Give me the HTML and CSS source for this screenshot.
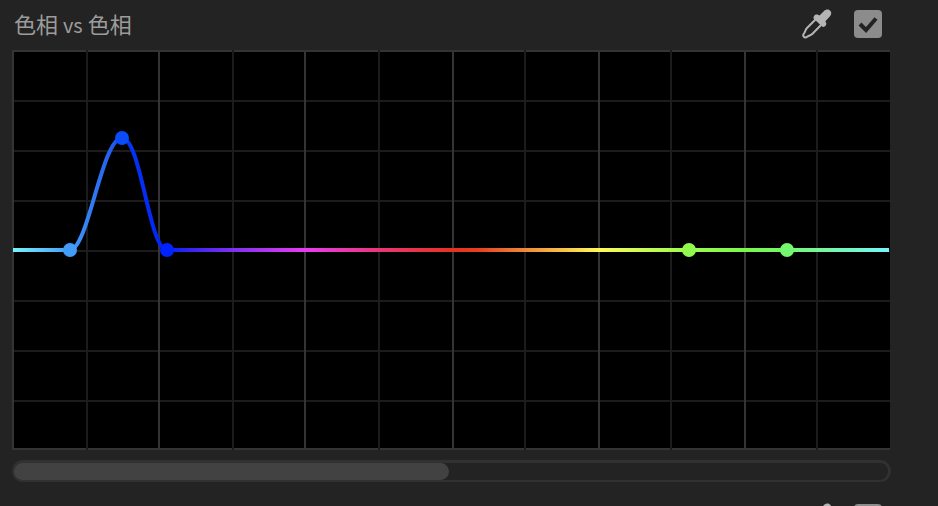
FILE: index.html
```html
<!DOCTYPE html>
<html lang="zh-CN">
<head>
    <meta charset="UTF-8">
    <meta name="viewport" content="width=device-width, initial-scale=1.0">
    <title>色相 vs 色相</title>
    <link rel="stylesheet" href="styles.css">
</head>
<body>
    <svg class="symbols" aria-hidden="true">
        <symbol id="dropper" viewBox="0 0 30 30">
            <path d="M13.5 10.5 L5 19 C3.4 20.6 3.2 22.4 2.4 23.8 C1 25.4 0.8 26.8 1.8 27.8 C2.8 28.8 4.4 28.4 5.8 27.2 C7.4 26.6 9 26.2 10.5 24.7 L19 16" fill="none" stroke="currentColor" stroke-width="2" stroke-linejoin="round"/>
            <path d="M11.6 9.5 C11 7.2 13.2 4.8 15.5 5.6 L17.5 6.6 L22 2 C24 0 26.7 0 28.2 1.8 C29.8 3.5 29.6 5.8 27.8 7.6 L23.4 12.2 L24.2 14 C24.8 16.3 22.5 18.5 20.3 17.8 Z" fill="currentColor"/>
        </symbol>
        <symbol id="tick" viewBox="0 0 28 28">
            <path d="M6 14 L12 20 L22 8.5" fill="none" stroke="#232323" stroke-width="4"/>
        </symbol>
    </svg>

    <section class="panel">
        <header class="panel-header">
            <h2 class="title">色相 <span class="versus">vs</span> 色相</h2>
            <button class="picker" type="button" aria-label="吸管">
                <svg class="picker-icon"><use href="#dropper"/></svg>
            </button>
            <label class="check" aria-label="启用色相 vs 色相">
                <input class="check-input" type="checkbox" checked>
                <svg class="check-icon"><use href="#tick"/></svg>
            </label>
        </header>

        <svg class="curve" viewBox="0 0 878 400">
            <defs>
                <linearGradient id="hue" gradientUnits="userSpaceOnUse" x1="0" y1="0" x2="878" y2="0">
                    <stop offset="0" stop-color="#78f5fc"/>
                    <stop offset="0.066" stop-color="#429cfa"/>
                    <stop offset="0.12" stop-color="#1c55ee"/>
                    <stop offset="0.13" stop-color="#0636f0"/>
                    <stop offset="0.177" stop-color="#0022fa"/>
                    <stop offset="0.205" stop-color="#3c24ee"/>
                    <stop offset="0.252" stop-color="#8030f0"/>
                    <stop offset="0.334" stop-color="#e93cf0"/>
                    <stop offset="0.418" stop-color="#e8367a"/>
                    <stop offset="0.502" stop-color="#e53220"/>
                    <stop offset="0.53" stop-color="#e63e20"/>
                    <stop offset="0.584" stop-color="#ee8a36"/>
                    <stop offset="0.669" stop-color="#fffa5a"/>
                    <stop offset="0.75" stop-color="#acfb50"/>
                    <stop offset="0.835" stop-color="#78f84a"/>
                    <stop offset="0.883" stop-color="#75f770"/>
                    <stop offset="1" stop-color="#74f6fb"/>
                </linearGradient>
            </defs>
            <rect width="878" height="400" fill="#000"/>
            <path class="grid-minor" d="M0 51H878M0 101H878M0 151H878M0 201H878M0 251H878M0 301H878M0 351H878"/>
            <path class="grid-major" d="M0 1H878M0 399H878M1 0V400M147 0V400M293 0V400M441 0V400M587 0V400M733 0V400"/>
            <path class="grid-minor" d="M75 0V400M221 0V400M367 0V400M513 0V400M659 0V400M805 0V400"/>
            <path class="curve-line" d="M1 200H58C76 200 90 88 110 88C129 88 137 200 155 200H877"/>
            <circle cx="58" cy="200" r="7" fill="#429cfa"/>
            <circle cx="110" cy="88" r="7" fill="#0a4cf8"/>
            <circle cx="155" cy="200" r="7" fill="#0022ff"/>
            <circle cx="677" cy="200" r="7" fill="#92fa4e"/>
            <circle cx="775" cy="200" r="7" fill="#75f770"/>
        </svg>

        <div class="scrollbar">
            <div class="thumb"></div>
        </div>
    </section>

    <section class="panel">
        <header class="panel-header">
            <button class="picker" type="button" aria-label="吸管">
                <svg class="picker-icon"><use href="#dropper"/></svg>
            </button>
            <label class="check" aria-label="启用曲线">
                <input class="check-input" type="checkbox" checked>
                <svg class="check-icon"><use href="#tick"/></svg>
            </label>
        </header>
    </section>
</body>
</html>
```

FILE: styles.css
```css
body {
    margin: 0;
    height: 100vh;
    overflow: hidden;
    background-color: #232323;
    color: #9c9c9c;
    font-family: "Noto Sans CJK SC", sans-serif;
}
.symbols {
    display: none;
}
.panel {
    padding: 10px 47px 12px 12px;
}
.panel-header {
    display: flex;
    align-items: center;
    justify-content: flex-end;
    gap: 22px;
    height: 28px;
    margin-bottom: 12px;
    padding: 0 9px 0 2px;
}
.title {
    margin: 0 auto 0 0;
    font-size: 22px;
    line-height: 28px;
    font-weight: 400;
}
.versus {
    font-size: 20px;
}
.picker {
    width: 30px;
    height: 30px;
    padding: 0;
    border: none;
    background: none;
    color: #b4b4b4;
    cursor: pointer;
}
.picker-icon {
    display: block;
    width: 30px;
    height: 30px;
}
.check {
    display: grid;
    width: 28px;
    height: 28px;
}
.check-input,
.check-icon {
    grid-area: 1 / 1;
    width: 28px;
    height: 28px;
    margin: 0;
}
.check-input {
    appearance: none;
    border-radius: 4px;
    background-color: #8c8c8c;
}
.check-icon {
    pointer-events: none;
    visibility: hidden;
}
.check-input:checked + .check-icon {
    visibility: visible;
}

/* 曲线 */
.curve {
    display: block;
    width: calc(100% - 1px);
}
.grid-minor,
.grid-major {
    fill: none;
    stroke: #1c1c1c;
    stroke-width: 2;
}
.grid-major {
    stroke: #343434;
}
.curve-line {
    fill: none;
    stroke: url(#hue);
    stroke-width: 4;
}

.scrollbar {
    margin-top: 10px;
    border: 2px solid #313131;
    border-top-width: 3px;
    border-right-width: 3px;
    border-radius: 11px;
}
.thumb {
    width: 49.8%;
    height: 17px;
    border-radius: 9px;
    background-color: #424242;
}
```
